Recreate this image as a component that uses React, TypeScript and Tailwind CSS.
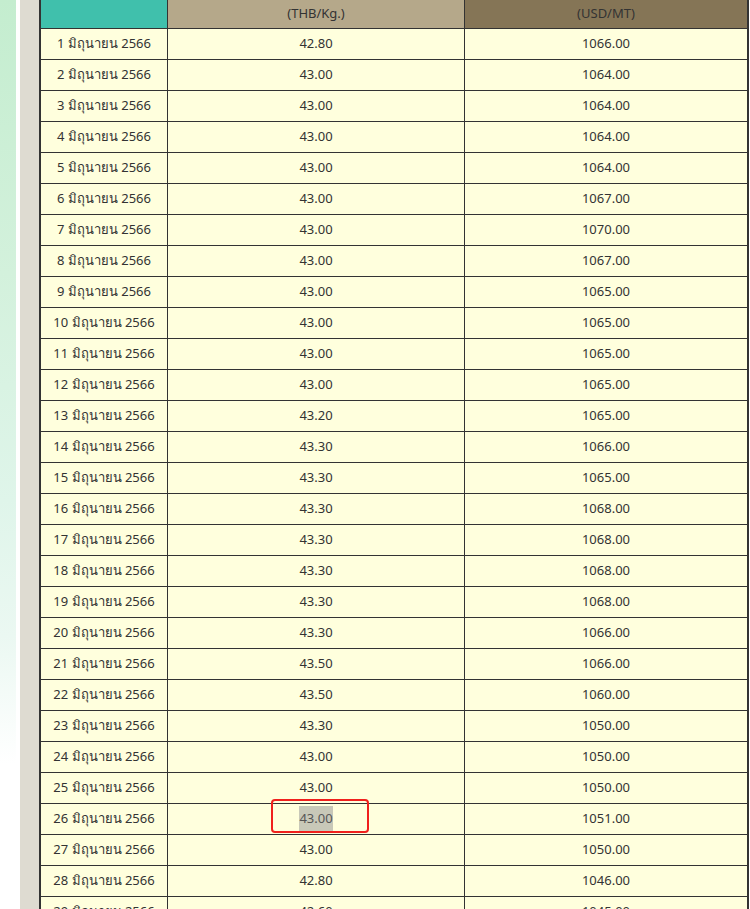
import React from "react";

const rows: [string, string][] = [
  ["42.80", "1066.00"],
  ["43.00", "1064.00"],
  ["43.00", "1064.00"],
  ["43.00", "1064.00"],
  ["43.00", "1064.00"],
  ["43.00", "1067.00"],
  ["43.00", "1070.00"],
  ["43.00", "1067.00"],
  ["43.00", "1065.00"],
  ["43.00", "1065.00"],
  ["43.00", "1065.00"],
  ["43.00", "1065.00"],
  ["43.20", "1065.00"],
  ["43.30", "1066.00"],
  ["43.30", "1065.00"],
  ["43.30", "1068.00"],
  ["43.30", "1068.00"],
  ["43.30", "1068.00"],
  ["43.30", "1068.00"],
  ["43.30", "1066.00"],
  ["43.50", "1066.00"],
  ["43.50", "1060.00"],
  ["43.30", "1050.00"],
  ["43.00", "1050.00"],
  ["43.00", "1050.00"],
  ["43.00", "1051.00"],
  ["43.00", "1050.00"],
  ["42.80", "1046.00"],
  ["42.60", "1045.00"],
];

export default function App() {
  return (
    <div
      className="flex h-[909px] w-[750px] overflow-hidden bg-white text-[13px] text-[#333]"
      style={{ fontFamily: "'Noto Sans', 'DejaVu Sans', sans-serif" }}
    >
      <div className="w-[16px] shrink-0 bg-[linear-gradient(to_bottom,#c4edcf_0%,#d3f1dc_30%,#dff5ea_55%,#ebf8f2_70%,#ffffff_84%)]" />
      <div className="w-[4px] shrink-0 bg-white" />
      <div className="w-[19px] shrink-0 bg-[#dedbd1]" />
      <div className="w-[710px] shrink-0 self-start border-x-2 border-[#333]">
        <div className="grid h-[29px] grid-cols-[127px_297px_282px] border-b border-[#333]">
          <div className="border-r border-[#333] bg-[#40c0ac]" />
          <div className="flex items-center justify-center border-r border-[#333] bg-[#b5a88a]">
            (THB/Kg.)
          </div>
          <div className="flex items-center justify-center bg-[#857556]">(USD/MT)</div>
        </div>
        {rows.map(([thb, usd], i) => (
          <div
            key={i}
            className="grid h-[31px] grid-cols-[127px_297px_282px] border-b border-[#333] bg-[#ffffdd]"
          >
            <div className="flex items-center justify-center border-r border-[#333]">
              {i + 1} มิถุนายน 2566
            </div>
            <div className="relative flex items-center justify-center border-r border-[#333]">
              {i === 25 ? (
                <>
                  <span className="bg-[#c8c8b8] py-[3px] text-[#555]">{thb}</span>
                  <div className="absolute left-[103px] top-[-5px] h-[34px] w-[98px] rounded-[4px] border-[2.5px] border-[#f0201c]" />
                </>
              ) : (
                thb
              )}
            </div>
            <div className="flex items-center justify-center">{usd}</div>
          </div>
        ))}
      </div>
    </div>
  );
}
